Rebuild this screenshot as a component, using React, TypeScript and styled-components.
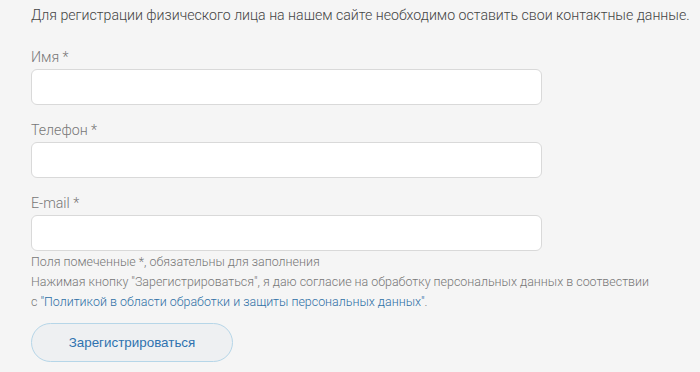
import React from "react";
import styled, { createGlobalStyle } from "styled-components";

const Global = createGlobalStyle`
  html, body { margin: 0; padding: 0; background: #f5f5f5; }
  body { font-family: Roboto, "Noto Sans", sans-serif; }
`;

const Page = styled.div`
  width: 700px;
  height: 372px;
  overflow: hidden;
  box-sizing: border-box;
  padding: 4px 0 0 31px;
  background: #f5f5f5;
`;

const Intro = styled.p`
  margin: 0 0 21px;
  font-size: 14.15px;
  font-weight: 300;
  line-height: 22px;
  color: #444;
  white-space: nowrap;
`;

const Field = styled.div`
  display: flex;
  flex-direction: column;
  gap: 2px;
  margin-bottom: 15px;
  &:last-of-type { margin-bottom: 1px; }
`;

const Label = styled.label`
  font-size: 14.2px;
  font-weight: 300;
  line-height: 20px;
  color: #777;
`;

const Input = styled.input`
  width: 511px;
  height: 36px;
  box-sizing: border-box;
  border: 1px solid #d9d9d9;
  border-radius: 6px;
  background: #fff;
  outline: none;
`;

const Note = styled.p`
  margin: 0;
  font-size: 12.45px;
  font-weight: 300;
  line-height: 20px;
  color: #777;
  white-space: nowrap;
`;

const Link = styled.a`
  color: #2f70a6;
  text-decoration: none;
`;

const Button = styled.button`
  margin-top: 11px;
  width: 202px;
  height: 39px;
  border-radius: 20px;
  border: 1px solid #b6d6e8;
  background: #eef0f2;
  color: #2f73b0;
  font-family: "Liberation Sans", Arial, sans-serif;
  font-size: 13.4px;
  cursor: pointer;
`;

export default function App() {
  return (
    <>
      <Global />
      <Page>
        <Intro>Для регистрации физического лица на нашем сайте необходимо оставить свои контактные данные.</Intro>
        <Field>
          <Label>Имя *</Label>
          <Input />
        </Field>
        <Field>
          <Label>Телефон *</Label>
          <Input />
        </Field>
        <Field>
          <Label>E-mail *</Label>
          <Input />
        </Field>
        <Note>Поля помеченные *, обязательны для заполнения</Note>
        <Note>Нажимая кнопку "Зарегистрироваться", я даю согласие на обработку персональных данных в соотвествии</Note>
        <Note>с <Link href="#">"Политикой в области обработки и защиты персональных данных"</Link>.</Note>
        <Button>Зарегистрироваться</Button>
      </Page>
    </>
  );
}
